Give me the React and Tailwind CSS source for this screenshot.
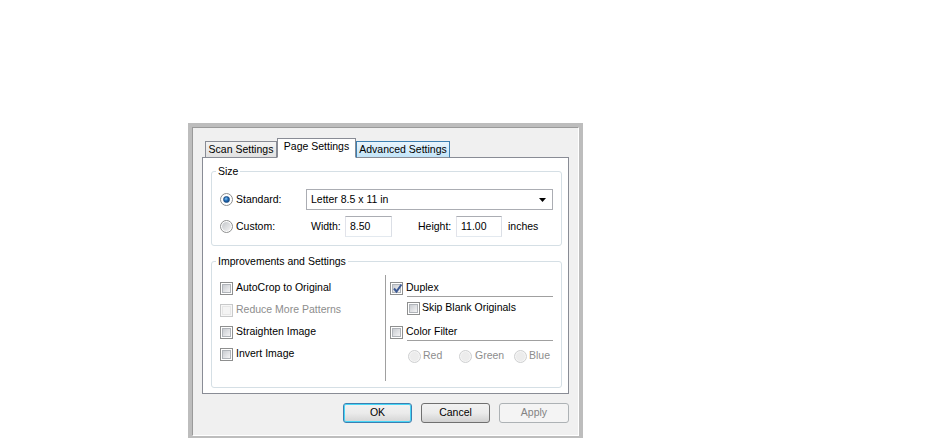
import React from "react";

const font = { fontFamily: '"Liberation Sans", Arial, sans-serif' };

function CheckBox({ checked = false, disabled = false }) {
  return (
    <span
      className={`relative flex w-[13px] h-[13px] shrink-0 items-center justify-center border ${
        disabled ? "border-[#c8c9ca] bg-[#f7f7f7]" : "border-[#8e8f8f] bg-white"
      }`}
    >
      <span
        className={`w-[9px] h-[9px] border ${
          disabled
            ? "border-[#e6e6e6] bg-[#f4f4f4]"
            : "border-[#b0b4b9] bg-gradient-to-br from-[#c9ccd1] to-[#f4f4f5]"
        }`}
      ></span>
      {checked && (
        <svg className="absolute left-[1px] top-[0px]" width="11" height="11" viewBox="0 0 11 11">
          <path d="M2 5.5 L4.5 8.5 L9.5 1.5" fill="none" stroke="#3d5a94" strokeWidth="2" />
        </svg>
      )}
    </span>
  );
}

function Radio({ checked = false, disabled = false }) {
  return (
    <span
      className={`flex w-[13px] h-[13px] shrink-0 items-center justify-center rounded-full border ${
        disabled ? "border-[#cfd0d1] bg-[#f5f5f5]" : "border-[#8e8f8f] bg-white"
      }`}
    >
      {checked ? (
        <span className="w-[7px] h-[7px] rounded-full bg-[radial-gradient(circle_at_40%_35%,#8cc8f5_0%,#1f6cb8_45%,#0d3a70_100%)] border border-[#1d4f86]"></span>
      ) : (
        <span
          className={`w-[9px] h-[9px] rounded-full ${
            disabled ? "bg-[#ececec]" : "bg-gradient-to-br from-[#c4c7cb] to-[#f3f3f3]"
          }`}
        ></span>
      )}
    </span>
  );
}

function Button({ children, primary = false, disabled = false }) {
  return (
    <div
      className={`flex h-[20px] items-center justify-center rounded-[3px] border ${
        primary
          ? "w-[69px] border-[#3c7fb1] shadow-[inset_0_0_0_1px_#48d6f6] bg-gradient-to-b from-[#f2f2f2] via-[#ebebeb] to-[#d4d4d4] text-black"
          : disabled
          ? "w-[70px] border-[#adb2b5] bg-[#f4f4f4] text-[#838383]"
          : "w-[69px] border-[#707070] bg-gradient-to-b from-[#f2f2f2] via-[#ebebeb] to-[#d1d1d1] text-black"
      }`}
    >
      {children}
    </div>
  );
}

export default function App() {
  return (
    <div className="w-[936px] h-[438px] bg-white overflow-hidden pt-[123px] pl-[188px]" style={font}>
      {/* dialog frame */}
      <div className="w-[395px] h-[315px] bg-[#bdbdbd] pt-[4px] px-[4px] pb-[2px]">
        <div className="h-[309px] bg-[#f0f0f0] border border-[#9a9a9a] border-r-white border-b-white pt-[10px] px-[9px] text-[10.5px] text-black">
          {/* tab strip */}
          <div className="relative z-10 flex items-end pl-[3px] -mb-px h-[20px]">
            <div className="flex w-[72px] h-[17px] items-center justify-center border border-[#898c95] bg-gradient-to-b from-[#f3f3f3] to-[#e1e1e1]">
              Scan Settings
            </div>
            <div className="flex w-[79px] h-[20px] items-center justify-center border border-[#898c95] border-b-white bg-white pb-[2px]">
              Page Settings
            </div>
            <div className="flex w-[94px] h-[17px] items-center justify-center border border-[#3c7fb1] border-b-[#898c95] bg-gradient-to-b from-[#e9f5fd] to-[#c2e4f8]">
              Advanced Settings
            </div>
          </div>

          {/* tab panel */}
          <div className="w-[367px] h-[237px] border border-[#898c95] bg-white pt-[7px] pl-[8px] pr-[6px] flex flex-col gap-[9px]">
            <fieldset className="border border-[#d5dfe5] rounded-[3px] px-[8px] pb-[8px]">
              <legend className="-ml-[4px] px-[2px] leading-[13px]">Size</legend>
              <div className="mt-[11px] flex h-[21px] items-center">
                <div className="flex w-[86px] items-center gap-[3px]">
                  <Radio checked />
                  <span>Standard:</span>
                </div>
                <div className="flex flex-1 h-[21px] items-center justify-between border border-[#abadb3] bg-white pl-[4px] pr-[6px]">
                  <span>Letter 8.5 x 11 in</span>
                  <svg width="7" height="4" viewBox="0 0 7 4">
                    <path d="M0 0 H7 L3.5 4 Z" fill="#000" />
                  </svg>
                </div>
              </div>
              <div className="mt-[6px] flex h-[21px] items-center">
                <div className="flex w-[91px] items-center gap-[3px]">
                  <Radio />
                  <span>Custom:</span>
                </div>
                <span className="w-[34px]">Width:</span>
                <div className="flex w-[47px] h-[21px] items-center border border-[#abadb3] border-l-[#e2e3ea] border-r-[#dbdfe6] border-b-[#e3e9ef] bg-white pl-[4px]">
                  8.50
                </div>
                <span className="ml-[26px] w-[38px]">Height:</span>
                <div className="flex w-[46px] h-[21px] items-center border border-[#abadb3] border-l-[#e2e3ea] border-r-[#dbdfe6] border-b-[#e3e9ef] bg-white pl-[4px]">
                  11.00
                </div>
                <span className="ml-[6px]">inches</span>
              </div>
            </fieldset>

            <fieldset className="border border-[#d5dfe5] rounded-[3px] pl-[8px] pr-[8px] pb-[6px]">
              <legend className="-ml-[4px] px-[2px] leading-[13px]">Improvements and Settings</legend>
              <div className="mt-[7px] flex h-[106px]">
                <div className="w-[165px] pt-[5px] flex flex-col gap-[6px]">
                  <div className="flex h-[16px] items-center gap-[3px]">
                    <CheckBox />
                    <span>AutoCrop to Original</span>
                  </div>
                  <div className="flex h-[16px] items-center gap-[3px] text-[#8d8d8d]">
                    <CheckBox disabled />
                    <span>Reduce More Patterns</span>
                  </div>
                  <div className="flex h-[16px] items-center gap-[3px]">
                    <CheckBox />
                    <span>Straighten Image</span>
                  </div>
                  <div className="flex h-[16px] items-center gap-[3px]">
                    <CheckBox />
                    <span>Invert Image</span>
                  </div>
                </div>
                <div className="flex-1 border-l border-[#a0a0a0] pl-[4px] pt-[5px] flex flex-col">
                  <div className="flex h-[16px] items-center gap-[3px]">
                    <CheckBox checked />
                    <span>Duplex</span>
                  </div>
                  <div className="ml-[17px] w-[146px] h-px bg-[#a0a0a0]"></div>
                  <div className="mt-[3px] ml-[17px] flex h-[16px] items-center gap-[2px]">
                    <CheckBox />
                    <span>Skip Blank Originals</span>
                  </div>
                  <div className="mt-[8px] flex h-[16px] items-center gap-[3px]">
                    <CheckBox />
                    <span>Color Filter</span>
                  </div>
                  <div className="ml-[17px] w-[146px] h-px bg-[#a0a0a0]"></div>
                  <div className="mt-[7px] ml-[18px] flex h-[16px] items-center text-[#8d8d8d]">
                    <div className="flex w-[51px] items-center gap-[2px]">
                      <Radio disabled />
                      <span>Red</span>
                    </div>
                    <div className="flex w-[55px] items-center gap-[3px]">
                      <Radio disabled />
                      <span>Green</span>
                    </div>
                    <div className="flex items-center gap-[2px]">
                      <Radio disabled />
                      <span>Blue</span>
                    </div>
                  </div>
                </div>
              </div>
            </fieldset>
          </div>

          {/* buttons */}
          <div className="mt-[9px] flex justify-end gap-[9px]">
            <Button primary>OK</Button>
            <Button>Cancel</Button>
            <Button disabled>Apply</Button>
          </div>
        </div>
      </div>
    </div>
  );
}
